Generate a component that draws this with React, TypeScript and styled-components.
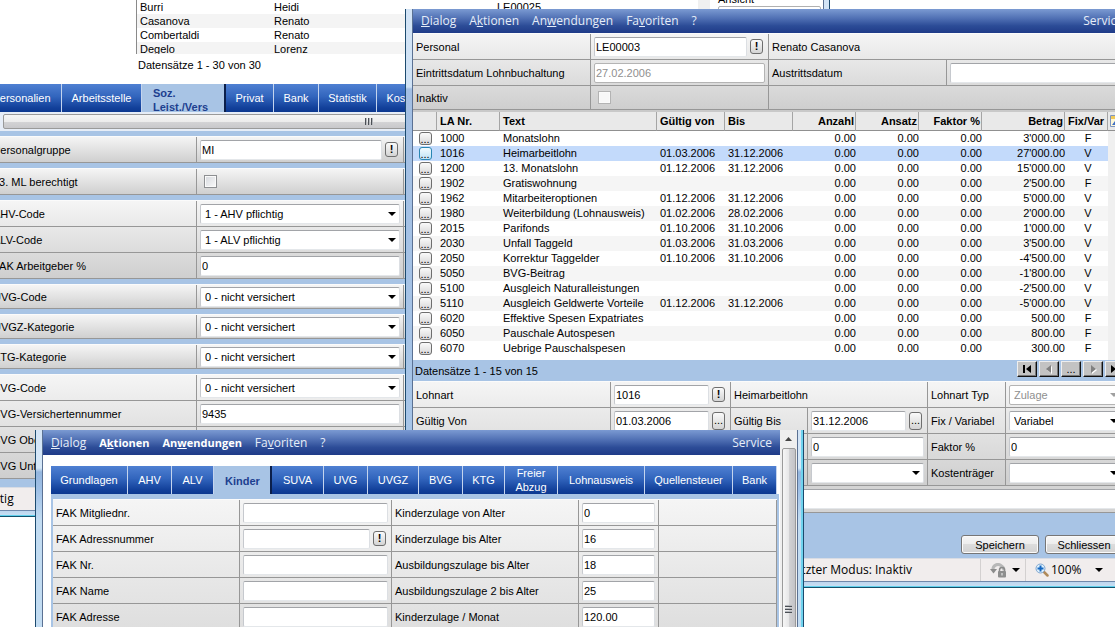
import React, { useId } from "react";
import styled, { createGlobalStyle, css } from "styled-components";

const GlobalStyle = createGlobalStyle`
  * { box-sizing: border-box; }
  body {
    margin: 0;
    background: #fff;
    font-family: "Liberation Sans", Arial, sans-serif;
    font-size: 11px;
    line-height: 14px;
    color: #000;
  }
  button, input, select, textarea { font: inherit; color: inherit; margin: 0; }
`;

const BLUE = "#a8c4e5";
const LINE = "#979797";
const UI_FONT = '"Open Sans", "Noto Sans", sans-serif';

/* ---------- window frame ---------- */

const Desktop = styled.main`
  position: relative;
  height: 100vh;
  overflow: hidden;
`;

const Frame = styled.section`
  position: absolute;
  padding: 0 6px;
  border: solid #1c4a6e;
  border-width: 0 1px;
  background: linear-gradient(#d3e4f6 0, #cfe2f5 78px, #a3bfe3 80px, #a9c8ea 100%);
`;

const PersonnelFrame = styled(Frame)`
  left: -30px;
  top: 0;
  width: 860px;
`;

const WageFrame = styled(Frame)`
  left: 405px;
  top: 9px;
  right: -23px;
`;

const ChildFrame = styled(Frame)`
  left: 35px;
  top: 430px;
  width: 769px;
  background: linear-gradient(#d3e4f6 0, #d6e8f8 38px, #94b6de 42px, #9fc0e6 60px, #c2dcf2 90px);
  box-shadow: inset -2px 0 0 #6fd3ee;
`;

const Body = styled.div`
  border: solid #5b7193;
  border-width: 0 1px;
  margin-right: -1px;
  background: #fff;
`;

const BottomEdge = styled.div`
  height: 7px;
  margin: 0 -6px;
  border-top: 1px solid #6f88ab;
  border-bottom: 1px solid #14506b;
  background: linear-gradient(#bcd6ef 0, #c8def2 4px, #5fd0ec 4px);
`;

/* ---------- menu ---------- */

const MenuBar = styled.nav<{ $h: number }>`
  display: flex;
  align-items: center;
  gap: 13px;
  height: ${(p) => p.$h}px;
  padding: 0 8px;
  background: linear-gradient(#7b9ad2 0, #4f6fb3 40%, #2c4c97 70%, #1f3b88 100%);
  font-family: ${UI_FONT};
  font-size: 12px;
`;

const MenuItem = styled.button<{ $strong?: boolean; $end?: boolean }>`
  padding: 0;
  border: 0;
  background: none;
  color: #e6edf8;
  line-height: 16px;
  ${(p) => p.$strong && css`font-weight: 700; font-size: 11px; color: #fff;`}
  ${(p) => p.$end && css`margin-left: auto;`}
`;

function Menu({ strong }: { strong?: boolean }) {
  return (
    <MenuBar $h={strong ? 25 : 24}>
      <MenuItem><u>D</u>ialog</MenuItem>
      <MenuItem $strong={strong}>A<u>k</u>tionen</MenuItem>
      <MenuItem $strong={strong}>An<u>w</u>endungen</MenuItem>
      <MenuItem>Fa<u>v</u>oriten</MenuItem>
      <MenuItem>?</MenuItem>
      <MenuItem $end>Service</MenuItem>
    </MenuBar>
  );
}

/* ---------- tabs ---------- */

const TabRow = styled.div`
  display: flex;
  height: 28px;
`;

const TabButton = styled.button<{ $w: number; $active?: boolean }>`
  flex: none;
  width: ${(p) => p.$w}px;
  padding: 0 9px;
  border: 0;
  border-right: 1px solid #c4d4ee;
  background: linear-gradient(#4f80d2 0, #3265bd 45%, #12409a 85%, #0c3890 100%);
  color: #fff;
  text-align: center;
  ${(p) =>
    p.$active &&
    css`
      border-right: 2px solid #0b1f4a;
      background: ${BLUE};
      color: #1d3f8f;
      font-weight: 700;
      text-align: left;
      padding: 2px 10px 0 11px;
    `}
`;

interface TabDef { text: string; w: number; active?: boolean }

function Tabs({ items }: { items: TabDef[] }) {
  return (
    <TabRow role="tablist">
      {items.map((t) => (
        <TabButton key={t.text} role="tab" aria-selected={!!t.active} $w={t.w} $active={t.active}>
          {t.text}
        </TabButton>
      ))}
    </TabRow>
  );
}

/* ---------- form parts ---------- */

const FormGrid = styled.div<{ $cols: string; $rows?: string; $to?: string }>`
  display: grid;
  grid-template-columns: ${(p) => p.$cols};
  grid-auto-rows: ${(p) => p.$rows ?? "26px"};
  border-top: 1px solid #fbfbfb;
  background: linear-gradient(#f5f5f5, ${(p) => p.$to ?? "#cecece"});
`;

const Cell = styled.div<{ $span?: number }>`
  display: flex;
  align-items: center;
  gap: 3px;
  min-width: 0;
  padding: 0 3px;
  border-right: 1px solid ${LINE};
  border-bottom: 1px solid ${LINE};
  white-space: nowrap;
  ${(p) => p.$span && css`grid-column: span ${p.$span};`}
`;

const Label = styled.label`
  white-space: nowrap;
`;

const box = css`
  height: 20px;
  border: 1px solid;
  border-color: #a2a4a8 #dcdfe3 #e4e7ea #c6c9ce;
  border-radius: 2px;
  background: #fff;
  outline: 0;
  &:disabled {
    background: #fff;
    border-color: #b4b4b4;
    color: #8f8f8f;
    opacity: 1;
  }
`;

const TextBox = styled.input`
  ${box}
  flex: 1;
  width: 0;
  min-width: 0;
  padding: 0 1px;
`;

const TickBox = styled.input`
  appearance: none;
  width: 13px;
  height: 13px;
  margin: 0 4px;
  border: 1px solid #8d8f92;
  background: linear-gradient(135deg, #d5d8dd, #fafafa);
  box-shadow: inset 0 0 0 1px #fafafa;
  &:disabled {
    border-color: #b3b3b3;
    background: #f7f7f7;
  }
`;

const SelectWrap = styled.span`
  display: grid;
  flex: 1;
  min-width: 0;
  align-items: center;
  > * { grid-area: 1 / 1; }
  > svg { justify-self: end; margin-right: 4px; pointer-events: none; }
`;

const SelectBox = styled.select`
  ${box}
  appearance: none;
  width: 100%;
  padding: 0 16px 0 4px;
`;

const SmallButton = styled.button<{ $tall?: boolean; $bold?: boolean }>`
  flex: none;
  width: 13px;
  height: ${(p) => (p.$tall ? 18 : 15)}px;
  margin-right: 2px;
  padding: 0;
  border: 1px solid #6e6e6e;
  border-radius: 3px;
  background: linear-gradient(#fafafa, #d4d4d4);
  line-height: 11px;
  font-weight: ${(p) => (p.$bold ? 700 : 400)};
`;

function Caret({ muted }: { muted?: boolean }) {
  return (
    <svg width="8" height="4" viewBox="0 0 8 4" aria-hidden="true">
      <path d="M0 0h8L4 4z" fill={muted ? "#a0a0a0" : "#000"} />
    </svg>
  );
}

function Select({ value, id, name, disabled }: { value: string; id?: string; name?: string; disabled?: boolean }) {
  return (
    <SelectWrap>
      <SelectBox id={id} aria-label={name} defaultValue={value} disabled={disabled}>
        <option>{value}</option>
      </SelectBox>
      <Caret muted={disabled} />
    </SelectWrap>
  );
}

interface FieldProps {
  label: string;
  value?: string;
  kind?: "text" | "select" | "check";
  button?: "!" | "...";
  disabled?: boolean;
}

function Field({ label, value = "", kind = "text", button, disabled }: FieldProps) {
  const id = useId();
  return (
    <>
      <Cell>{label && <Label htmlFor={id}>{label}</Label>}</Cell>
      <Cell>
        {kind === "text" && <TextBox id={id} defaultValue={value} disabled={disabled} />}
        {kind === "select" && <Select id={id} value={value} disabled={disabled} />}
        {kind === "check" && <TickBox id={id} type="checkbox" disabled={disabled} />}
        {button && (
          <SmallButton $bold={button === "!"} $tall={button === "..."} aria-label={label + " wählen"}>
            {button}
          </SmallButton>
        )}
      </Cell>
    </>
  );
}

const StatusBar = styled.footer`
  display: flex;
  align-items: center;
  height: 23px;
  padding-left: 4px;
  border-top: 1px solid #d8dce4;
  background: #f1eded;
  font-family: ${UI_FONT};
  font-size: 12px;
`;

/* ---------- personnel window ---------- */

const ListArea = styled.div`
  display: flex;
  height: 54px;
  overflow: hidden;
  padding-left: 158px;
`;

const PersonList = styled.table`
  flex: none;
  width: 562px;
  table-layout: fixed;
  border-spacing: 0;
  border-left: 1px solid #8a8a8a;
  td { height: 14px; padding: 0 0 0 3px; }
  tr:nth-child(even) { background: #f4f4f4; }
`;

const ListTrack = styled.div`
  flex: none;
  width: 12px;
  height: 54px;
  background: #f0f0f0;
`;

const ViewBox = styled.div`
  flex: 1;
  margin: -8px 2px 0 8px;
  > div {
    height: 30px;
    border: 1px solid #b0b0b0;
    border-radius: 2px;
  }
`;

const ListCount = styled.p`
  margin: 0;
  padding: 4px 0 12px 160px;
`;

const PersonnelTabs = styled.div`
  padding-left: 4px;
  background: #fff;
`;

const GroupArea = styled.div`
  display: flex;
  flex-direction: column;
  gap: 5px;
  padding: 0 0 8px 12px;
  background: ${BLUE};
`;

const ScrollStrip = styled.div`
  height: 22px;
  padding: 2px 0 0 13px;
  margin: 0 0 -3px;
  background: linear-gradient(#e6edf7 19px, ${BLUE} 19px);
`;

const ScrollThumb = styled.div`
  display: flex;
  align-items: center;
  justify-content: center;
  width: 732px;
  height: 15px;
  border: 1px solid #9a9a9a;
  border-radius: 2px;
  background: linear-gradient(#f6f6f6 0, #ececec 50%, #d4d4d6 50%, #c8c8cb 100%);
`;

function Grip({ vertical }: { vertical?: boolean }) {
  return (
    <svg width="8" height="8" viewBox="0 0 8 8" aria-hidden="true" transform={vertical ? undefined : "rotate(90)"}>
      <path d="M0 1.500h7M0 4.500h7M0 7.500h7" stroke="#4b4f55" />
      <path d="M0 .5h7M0 3.500h7M0 6.500h7" stroke="#b5b8bd" />
    </svg>
  );
}

const groups: { rows: string; fields: FieldProps[] }[] = [
  { rows: "26px", fields: [{ label: "Personalgruppe", value: "MI", button: "!" }] },
  { rows: "26px", fields: [{ label: "13. ML berechtigt", kind: "check" }] },
  {
    rows: "26px",
    fields: [
      { label: "AHV-Code", value: "1 - AHV pflichtig", kind: "select" },
      { label: "ALV-Code", value: "1 - ALV pflichtig", kind: "select" },
      { label: "FAK Arbeitgeber %", value: "0" },
    ],
  },
  { rows: "24px", fields: [{ label: "UVG-Code", value: "0 - nicht versichert", kind: "select" }] },
  { rows: "24px", fields: [{ label: "UVGZ-Kategorie", value: "0 - nicht versichert", kind: "select" }] },
  { rows: "24px", fields: [{ label: "KTG-Kategorie", value: "0 - nicht versichert", kind: "select" }] },
  {
    rows: "26px",
    fields: [
      { label: "BVG-Code", value: "0 - nicht versichert", kind: "select" },
      { label: "BVG-Versichertennummer", value: "9435" },
      { label: "BVG Obergrenze" },
      { label: "BVG Untergrenze" },
    ],
  },
];

const persons = [
  ["Burri", "Heidi", "LE00025"],
  ["Casanova", "Renato", ""],
  ["Combertaldi", "Renato", ""],
  ["Degelo", "Lorenz", ""],
];

function PersonnelWindow() {
  return (
    <PersonnelFrame aria-label="Personal">
      <Body>
        <ListArea>
          <PersonList>
            <colgroup><col width="134" /><col width="223" /><col /></colgroup>
            <tbody>
              {persons.map((p) => (
                <tr key={p[0]}>{p.map((v, i) => <td key={i}>{v}</td>)}</tr>
              ))}
            </tbody>
          </PersonList>
          <ListTrack />
          <ViewBox>Ansicht<div /></ViewBox>
        </ListArea>
        <ListCount>Datensätze 1 - 30 von 30</ListCount>
        <PersonnelTabs>
          <Tabs
            items={[
              { text: "Personalien", w: 80 },
              { text: "Arbeitsstelle", w: 80 },
              { text: "Soz. Leist./Vers", w: 84, active: true },
              { text: "Privat", w: 48 },
              { text: "Bank", w: 45 },
              { text: "Statistik", w: 58 },
              { text: "Kosten", w: 54 },
            ]}
          />
        </PersonnelTabs>
        <GroupArea>
          <ScrollStrip><ScrollThumb><Grip /></ScrollThumb></ScrollStrip>
          {groups.map((g) => (
            <FormGrid key={g.fields[0].label} $cols="207px 207px 1fr" $rows={g.rows}>
              {g.fields.map((f) => (
                <React.Fragment key={f.label}>
                  <Field {...f} />
                  <Cell />
                </React.Fragment>
              ))}
            </FormGrid>
          ))}
        </GroupArea>
        <StatusBar>Fertig</StatusBar>
      </Body>
      <BottomEdge />
    </PersonnelFrame>
  );
}

/* ---------- wage type window ---------- */

const WageForms = styled.div`
  padding-right: 5px;
  background: ${BLUE};
`;

const WageArea = styled.div`
  display: flex;
  border-top: 2px solid #c9c9c9;
`;

const WageTable = styled.table`
  flex: 1;
  width: 100%;
  table-layout: fixed;
  border-spacing: 0;
  margin-bottom: 4px;
  th {
    height: 19px;
    padding: 0 1px 0 3px;
    border-right: 1px solid #a5a5a5;
    border-bottom: 1px solid #909090;
    background: #e9e9e9;
    text-align: left;
    white-space: nowrap;
  }
  td { height: 15px; padding: 0 0 0 3px; white-space: nowrap; line-height: 15px; }
  tr > :nth-child(n + 6):nth-child(-n + 9) { text-align: right; }
  td:nth-child(10) { text-align: center; }
  td:first-child, th:first-child { padding: 0; text-align: center; }
`;

const WageRow = styled.tr<{ $selected: boolean }>`
  &:nth-child(even) { background: #f5f5f5; }
  ${(p) => p.$selected && css`&&& { background: #c3dafb; }`}
`;

const RowButton = styled.button<{ $selected: boolean }>`
  display: block;
  width: 13px;
  height: 13px;
  margin: 1px auto;
  padding: 0;
  border: 1px solid ${(p) => (p.$selected ? "#2a86b3" : "#6e6e6e")};
  border-radius: 3px;
  background: ${(p) => (p.$selected ? "linear-gradient(#f2fbff, #bfe3f5)" : "linear-gradient(#fafafa, #d8d8d8)")};
  line-height: 8px;
`;

const SideTrack = styled.div`
  display: flex;
  flex-direction: column;
  align-items: center;
  justify-content: space-between;
  flex: none;
  width: 23px;
  padding-bottom: 9px;
  background: #f0f0f0;
`;

const SideHead = styled.div`
  width: 100%;
  height: 19px;
  padding: 2px;
  border-bottom: 1px solid #909090;
  background: #e9e9e9;
`;

const SideArrow = styled.div`
  display: flex;
  flex: 1;
  align-items: flex-start;
  padding-top: 8px;
`;

const PagerBar = styled.div`
  display: flex;
  align-items: center;
  height: 21px;
  padding: 0 6px 0 2px;
  background: ${BLUE};
  > span { flex: 1; }
`;

const PagerButton = styled.button`
  display: flex;
  align-items: center;
  justify-content: center;
  width: 20px;
  height: 16px;
  margin: 0 0 3px 2px;
  padding: 0;
  border: 1px solid;
  border-color: #eee #111 #111 #eee;
  box-shadow: inset -1px -1px 0 #777;
  background: #c3c3c3;
  line-height: 10px;
`;

const NoteArea = styled.div`
  display: flex;
  padding: 3px;
  border-bottom: 1px solid ${LINE};
  background: #d4d4d4;
`;

const NoteBox = styled.textarea`
  ${box}
  flex: 1;
  resize: none;
`;

const ActionBar = styled.div`
  display: flex;
  justify-content: flex-end;
  gap: 6px;
  padding: 22px 8px 4px;
  background: ${BLUE};
`;

const ActionButton = styled.button`
  width: 78px;
  height: 19px;
  padding: 0;
  border: 1px solid #767676;
  border-radius: 3px;
  background: linear-gradient(#f6f6f6 0, #ececec 50%, #dcdcdc 50%, #d2d2d2 100%);
  box-shadow: inset 0 0 0 1px #fafafa;
`;

const StatusMode = styled.span`
  margin-left: auto;
  padding-right: 68px;
`;

const StatusCell = styled.div<{ $w: number; $end: number }>`
  display: flex;
  align-items: center;
  gap: 2px;
  width: ${(p) => p.$w}px;
  height: 100%;
  padding: 0 ${(p) => p.$end}px 0 9px;
  border-left: 1px solid #d3d0d0;
  > :last-child { margin-left: auto; }
`;

const wages = [
  ["1000", "Monatslohn", "", "", "3'000.00", "F"],
  ["1016", "Heimarbeitlohn", "01.03.2006", "31.12.2006", "27'000.00", "V"],
  ["1200", "13. Monatslohn", "01.12.2006", "31.12.2006", "15'000.00", "V"],
  ["1902", "Gratiswohnung", "", "", "2'500.00", "F"],
  ["1962", "Mitarbeiteroptionen", "01.12.2006", "31.12.2006", "5'000.00", "V"],
  ["1980", "Weiterbildung (Lohnausweis)", "01.02.2006", "28.02.2006", "2'000.00", "V"],
  ["2015", "Parifonds", "01.10.2006", "31.10.2006", "1'000.00", "V"],
  ["2030", "Unfall Taggeld", "01.03.2006", "31.03.2006", "3'500.00", "V"],
  ["2050", "Korrektur Taggelder", "01.10.2006", "31.10.2006", "-4'500.00", "V"],
  ["5050", "BVG-Beitrag", "", "", "-1'800.00", "V"],
  ["5100", "Ausgleich Naturalleistungen", "", "", "-2'500.00", "V"],
  ["5110", "Ausgleich Geldwerte Vorteile", "01.12.2006", "31.12.2006", "-5'000.00", "V"],
  ["6020", "Effektive Spesen Expatriates", "", "", "500.00", "F"],
  ["6050", "Pauschale Autospesen", "", "", "800.00", "F"],
  ["6070", "Uebrige Pauschalspesen", "", "", "300.00", "F"],
];

const heads = ["", "LA Nr.", "Text", "Gültig von", "Bis", "Anzahl", "Ansatz", "Faktor %", "Betrag", "Fix/Var"];
const widths = [24, 63, 157, 68, 68, 63, 63, 63, 83, 43];

function PagerIcon({ kind }: { kind: "first" | "prev" | "next" | "last" }) {
  const off = kind === "prev" || kind === "next";
  const paths = {
    first: "M1 0h2v8H1zM9 0v8L4 4z",
    prev: "M7 0v8L2 4z",
    next: "M3 0v8l5-4z",
    last: "M1 0v8l5-4zM7 0h2v8H7z",
  };
  return (
    <svg width="10" height="9" viewBox="0 0 10 9" aria-hidden="true">
      {off && <path d={paths[kind]} fill="#fff" transform="translate(1 1)" />}
      <path d={paths[kind]} fill={off ? "#808080" : "#000"} />
    </svg>
  );
}

function WageWindow() {
  return (
    <WageFrame aria-label="Lohnarten">
      <Body>
        <Menu />
        <WageForms>
          <FormGrid $cols="178px 178px 178px 1fr" $rows="26px 26px 24px">
            <Field label="Personal" value="LE00003" button="!" />
            <Cell $span={2}>Renato Casanova</Cell>
            <Field label="Eintrittsdatum Lohnbuchaltung" value="27.02.2006" disabled />
            <Field label="Austrittsdatum" />
            <Field label="Inaktiv" kind="check" disabled />
            <Cell $span={2} />
          </FormGrid>
        </WageForms>
        <WageArea>
          <WageTable>
            <colgroup>{widths.map((w, i) => <col key={i} width={w} />)}</colgroup>
            <thead>
              <tr>{heads.map((h) => <th key={h}>{h}</th>)}</tr>
            </thead>
            <tbody>
              {wages.map(([nr, text, from, to, amount, fix]) => {
                const selected = nr === "1016";
                return (
                  <WageRow key={nr} $selected={selected}>
                    <td><RowButton $selected={selected} aria-label={"Details " + nr}>...</RowButton></td>
                    <td>{nr}</td>
                    <td>{text}</td>
                    <td>{from}</td>
                    <td>{to}</td>
                    <td>0.00</td>
                    <td>0.00</td>
                    <td>0.00</td>
                    <td>{amount}</td>
                    <td>{fix}</td>
                  </WageRow>
                );
              })}
            </tbody>
          </WageTable>
          <SideTrack>
            <SideHead>
              <svg width="14" height="14" viewBox="0 0 14 14" aria-hidden="true">
                <path d="M.5 1.500h12v11H.5z" fill="#fff8d8" stroke="#7f96c0" />
                <path d="M1 2h11v3H1z" fill="#f0c95a" />
                <path d="M2 11l3-4 3 2 3-2v4z" fill="#3f6fc4" />
              </svg>
            </SideHead>
            <SideArrow>
              <svg width="8" height="4" viewBox="0 0 8 4" aria-hidden="true"><path d="M0 4h8L4 0z" fill="#777" /></svg>
            </SideArrow>
            <Caret muted />
          </SideTrack>
        </WageArea>
        <PagerBar>
          <span>Datensätze 1 - 15 von 15</span>
          <PagerButton aria-label="Erste"><PagerIcon kind="first" /></PagerButton>
          <PagerButton aria-label="Zurück"><PagerIcon kind="prev" /></PagerButton>
          <PagerButton aria-label="Mehr">...</PagerButton>
          <PagerButton aria-label="Weiter"><PagerIcon kind="next" /></PagerButton>
          <PagerButton aria-label="Letzte"><PagerIcon kind="last" /></PagerButton>
        </PagerBar>
        <WageForms>
          <FormGrid $cols="198px 120px 77px 120px 78px 1fr">
            <Field label="Lohnart" value="1016" button="!" />
            <Cell $span={2}>Heimarbeitlohn</Cell>
            <Field label="Lohnart Typ" value="Zulage" kind="select" disabled />
            <Field label="Gültig Von" value="01.03.2006" button="..." />
            <Field label="Gültig Bis" value="31.12.2006" button="..." />
            <Field label="Fix / Variabel" value="Variabel" kind="select" />
            <Cell /><Cell /><Cell />
            <Cell><TextBox aria-label="Ansatz" defaultValue="0" /></Cell>
            <Field label="Faktor %" value="0" />
            <Cell /><Cell /><Cell />
            <Cell><Select name="Kostenstelle" value="" /></Cell>
            <Field label="Kostenträger" value="" kind="select" />
          </FormGrid>
          <NoteArea><NoteBox aria-label="Bemerkung" /></NoteArea>
        </WageForms>
        <ActionBar>
          <ActionButton>Speichern</ActionButton>
          <ActionButton>Schliessen</ActionButton>
        </ActionBar>
        <StatusBar>
          <StatusMode>Geschützter Modus: Inaktiv</StatusMode>
          <StatusCell $w={45} $end={5}>
            <svg width="17" height="15" viewBox="0 0 17 15" aria-hidden="true">
              <path d="M3 7a5 5 0 0 1 8-4.500 6 6 0 0 1 3 5" fill="none" stroke="#b8b8b8" strokeWidth="3" />
              <path d="M0 6h7l-3.500 4.500z" fill="#8c8c8c" />
              <path d="M9.500 9V7a2.500 2.500 0 0 1 5 0v2" fill="none" stroke="#8a8a8a" strokeWidth="1.500" />
              <rect x="8" y="8" width="8" height="6.500" rx="1" fill="#8e8e8e" />
              <path d="M12 10v2.500" stroke="#f4f4f4" />
            </svg>
            <Caret />
          </StatusCell>
          <StatusCell $w={106} $end={28}>
            <svg width="14" height="14" viewBox="0 0 14 14" aria-hidden="true">
              <path d="M9 9l3.500 3.500" stroke="#b08a5a" strokeWidth="2.500" strokeLinecap="round" />
              <circle cx="5.500" cy="5.500" r="4.500" fill="#dff0fc" stroke="#7fa5cf" />
              <path d="M5.500 2.500v6M2.500 5.500h6" stroke="#1668c1" strokeWidth="2" />
            </svg>
            100%
            <Caret />
          </StatusCell>
        </StatusBar>
      </Body>
      <BottomEdge />
    </WageFrame>
  );
}

/* ---------- child allowance window ---------- */

const ChildBody = styled(Body)`
  display: flex;
`;

const ChildMain = styled.div`
  flex: 1;
  min-width: 0;
`;

const TabPanel = styled.div`
  margin: 11px 1px 0 8px;
`;

const PanelFrame = styled.div`
  padding: 5px 2px 0;
  background: ${BLUE};
`;

const VScroll = styled.div`
  display: flex;
  flex-direction: column;
  align-items: center;
  flex: none;
  width: 17px;
  padding: 7px 1px 0;
  background: #efefef;
`;

const VThumb = styled.div`
  display: flex;
  align-items: center;
  justify-content: center;
  flex: 1;
  width: 14px;
  min-height: 322px;
  margin-top: 7px;
  border: 1px solid #9a9a9a;
  border-radius: 2px;
  background: linear-gradient(90deg, #f6f6f6 0, #e6e6e7 50%, #d2d2d4 50%, #c3c3c7 100%);
`;

const childRows: [FieldProps, FieldProps][] = [
  [{ label: "FAK Mitgliednr." }, { label: "Kinderzulage von Alter", value: "0" }],
  [{ label: "FAK Adressnummer", button: "!" }, { label: "Kinderzulage bis Alter", value: "16" }],
  [{ label: "FAK Nr." }, { label: "Ausbildungszulage bis Alter", value: "18" }],
  [{ label: "FAK Name" }, { label: "Ausbildungszulage 2 bis Alter", value: "25" }],
  [{ label: "FAK Adresse" }, { label: "Kinderzulage / Monat", value: "120.00" }],
];

function ChildWindow() {
  return (
    <ChildFrame aria-label="Kinder">
      <ChildBody>
        <ChildMain>
          <Menu strong />
          <TabPanel>
            <Tabs
              items={[
                { text: "Grundlagen", w: 77 },
                { text: "AHV", w: 44 },
                { text: "ALV", w: 42 },
                { text: "Kinder", w: 58, active: true },
                { text: "SUVA", w: 52 },
                { text: "UVG", w: 44 },
                { text: "UVGZ", w: 51 },
                { text: "BVG", w: 44 },
                { text: "KTG", w: 42 },
                { text: "Freier Abzug", w: 53 },
                { text: "Lohnausweis", w: 87 },
                { text: "Quellensteuer", w: 88 },
                { text: "Bank", w: 44 },
              ]}
            />
            <PanelFrame>
              <FormGrid $cols="187px 152px 187px 80px 1fr" $to="#dedede">
                {childRows.map(([a, b]) => (
                  <React.Fragment key={a.label}>
                    <Field {...a} />
                    <Field {...b} />
                    <Cell />
                  </React.Fragment>
                ))}
              </FormGrid>
            </PanelFrame>
          </TabPanel>
        </ChildMain>
        <VScroll>
          <svg width="7" height="4" viewBox="0 0 7 4" aria-hidden="true"><path d="M0 4h7L3.500 0z" fill="#444" /></svg>
          <VThumb><Grip vertical /></VThumb>
        </VScroll>
      </ChildBody>
    </ChildFrame>
  );
}

export default function App() {
  return (
    <>
      <GlobalStyle />
      <Desktop>
        <PersonnelWindow />
        <WageWindow />
        <ChildWindow />
      </Desktop>
    </>
  );
}
